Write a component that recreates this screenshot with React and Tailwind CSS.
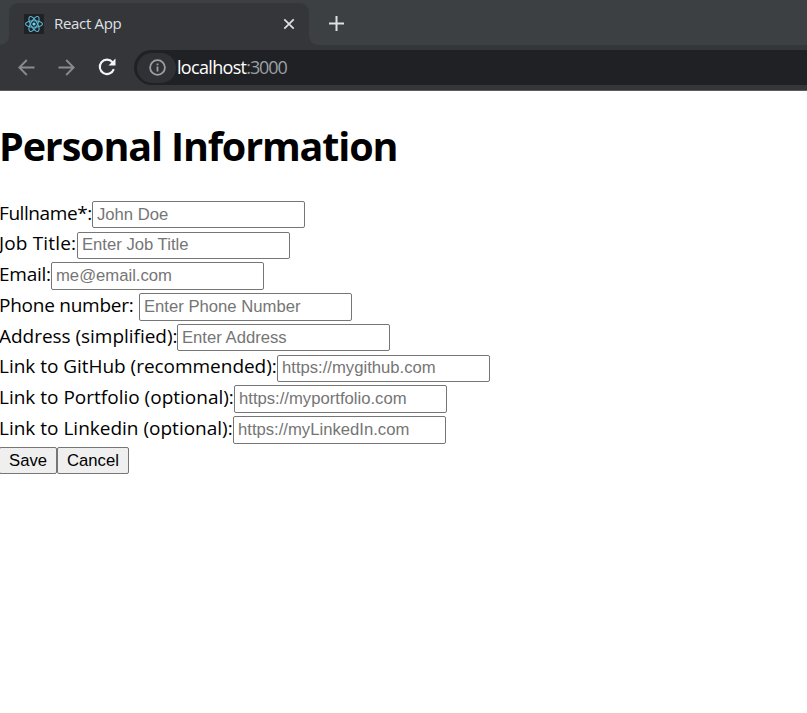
const fields = [
  { label: 'Fullname*:', width: 'w-[92px]', tracking: 'tracking-[-0.42px]', placeholder: 'John Doe' },
  { label: 'Job Title:', width: 'w-[77px]', tracking: 'tracking-[0.16px]', placeholder: 'Enter Job Title' },
  { label: 'Email:', width: 'w-[51px]', tracking: 'tracking-[-0.25px]', placeholder: 'me@email.com' },
  { label: 'Phone number:', width: 'w-[139px]', tracking: 'tracking-[-0.25px]', placeholder: 'Enter Phone Number' },
  { label: 'Address (simplified):', width: 'w-[177px]', tracking: 'tracking-[-0.03px]', placeholder: 'Enter Address' },
  { label: 'Link to GitHub (recommended):', width: 'w-[277px]', tracking: 'tracking-[-0.03px]', placeholder: 'https://mygithub.com' },
  { label: 'Link to Portfolio (optional):', width: 'w-[234px]', tracking: 'tracking-[0px]', placeholder: 'https://myportfolio.com' },
  { label: 'Link to Linkedin (optional):', width: 'w-[233px]', tracking: 'tracking-[0px]', placeholder: 'https://myLinkedIn.com' },
];

function ReactLogo() {
  return (
    <svg className="size-5 shrink-0" viewBox="0 0 20 20" fill="none" stroke="#5ab9d3" strokeWidth="1.1">
      <rect width="20" height="20" rx="1" fill="#202124" stroke="none" />
      <ellipse cx="10" cy="10" rx="8.5" ry="3.3" />
      <ellipse cx="10" cy="10" rx="8.5" ry="3.3" transform="rotate(60 10 10)" />
      <ellipse cx="10" cy="10" rx="8.5" ry="3.3" transform="rotate(120 10 10)" />
      <circle cx="10" cy="10" r="1.6" fill="#61dafb" stroke="none" />
    </svg>
  );
}

function TabStrip() {
  return (
    <div className="flex h-[45px] bg-[#3c4043] pt-[3px]">
      <div className="flex w-[9px] items-end bg-[#3c4043]">
        <div className="h-[42px] w-[9px] bg-[#35363a]">
          <div className="h-[42px] w-[9px] rounded-br-[9px] bg-[#3c4043]" />
        </div>
      </div>
      <div className="flex h-[42px] w-[300px] items-center rounded-t-[9px] bg-[#35363a] pl-[15px] pr-[14px]">
        <ReactLogo />
        <span className="-mt-[2px] ml-[10px] grow text-[15px] tracking-[-0.32px] text-[#dfe1e5]">React App</span>
        <svg className="size-3" viewBox="0 0 12 12" stroke="#dfe1e5" strokeWidth="1.7">
          <path d="M1.3 1.3 10.7 10.7M10.7 1.3 1.3 10.7" />
        </svg>
      </div>
      <div className="flex grow bg-[#35363a]">
        <div className="h-[42px] grow rounded-bl-[9px] bg-[#3c4043] pl-[20px] pt-[13px]">
          <svg className="size-[15px]" viewBox="0 0 15 15" stroke="#dfe1e5" strokeWidth="2">
            <path d="M7.5 0V15M0 7.5H15" />
          </svg>
        </div>
      </div>
    </div>
  );
}

function Toolbar() {
  return (
    <div className="flex h-[46px] items-start border-b border-[#5b5c60] bg-[#35363a] pl-[18px] pt-[5px]">
      <div className="flex h-[35px] w-[116px] items-center">
        <svg className="size-[17px]" viewBox="0 0 17 17" fill="none" stroke="#8a8b8e" strokeWidth="1.8">
          <path d="M16.5 8.5H1.5M8.8 1 1.3 8.5 8.8 16" />
        </svg>
        <svg className="ml-[23px] size-[17px]" viewBox="0 0 17 17" fill="none" stroke="#8a8b8e" strokeWidth="1.8">
          <path d="M0.5 8.5H15.5M8.2 1 15.7 8.5 8.2 16" />
        </svg>
        <svg className="-mt-px ml-[23px] size-[18px]" viewBox="0 0 18 18" fill="none" stroke="#f4f5f7" strokeWidth="2.1">
          <path d="M15.8 11.2A7.2 7.2 0 1 1 14.5 4.2" />
          <path d="M17.5 0.5V7.5H10.5Z" fill="#f4f5f7" stroke="none" />
        </svg>
      </div>
      <div className="flex h-[35px] grow items-center rounded-l-full bg-[#202124] pl-[3px]">
        <div className="flex h-[30px] w-[39px] items-center rounded-full bg-[#303134] pl-[11px]">
          <svg className="ml-[0.5px] size-[17px]" viewBox="0 0 17 17" fill="none" stroke="#9aa0a6" strokeWidth="1.8">
            <circle cx="8.5" cy="8.5" r="7.4" />
            <path d="M8.5 7.6V12.6M8.5 4.4V6.2" />
          </svg>
        </div>
        <span className="ml-px whitespace-nowrap text-[18px] tracking-[-0.68px] text-white">
          localhost<span className="tracking-[-1.1px] text-[#9aa0a6]">:3000</span>
        </span>
      </div>
    </div>
  );
}

export default function App() {
  return (
    <div className="h-[713px] w-[807px] overflow-hidden bg-white font-['Open_Sans',sans-serif] text-black">
      <TabStrip />
      <Toolbar />
      <main>
        <h1 className="-ml-px h-[109.9px] whitespace-nowrap pt-[28px] text-[39.5px] font-bold leading-[54px] tracking-[-1.15px]"><span>Personal Information</span></h1>
        <form>
          {fields.map(({ label, width, tracking, placeholder }) => (
            <div key={label} className="flex h-[30.75px] items-start">
              <label className={`${width} ${tracking} -mt-[0.25px] shrink-0 whitespace-nowrap text-[19px] leading-[25px]`}><span className="-ml-px">{label}</span></label>
              <input
                placeholder={placeholder}
                className="h-[27.5px] w-[213px] rounded-[2px] border border-[#767676] bg-white px-[4px] font-['Liberation_Sans',sans-serif] text-[16.67px] placeholder:text-[#757575]"
              />
            </div>
          ))}
          <div className="-ml-px flex font-['Liberation_Sans',sans-serif] text-[16.67px]">
            <button type="button" className="h-[27px] w-[58px] rounded-[2px] border border-[#767676] bg-[#efefef]">Save</button>
            <button type="button" className="h-[27px] w-[72px] rounded-[2px] border border-[#767676] bg-[#efefef]">Cancel</button>
          </div>
        </form>
      </main>
    </div>
  );
}
